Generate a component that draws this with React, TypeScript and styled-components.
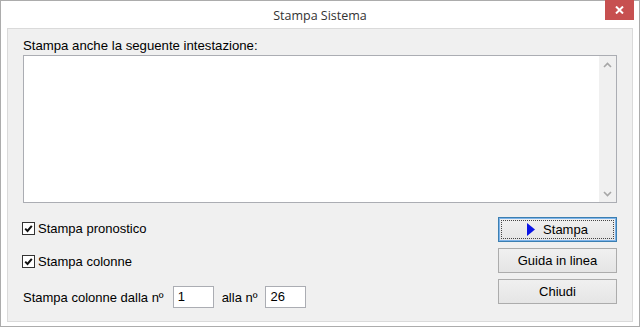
import * as React from 'react';
import styled, { createGlobalStyle } from 'styled-components';

const GlobalStyle = createGlobalStyle`
  html, body {
    margin: 0;
    padding: 0;
    background: #ffffff;
  }
  * {
    box-sizing: border-box;
  }
`;

function ChevronUp() {
  return (
    <svg width="9" height="6" viewBox="0 0 9 6">
      <path d="M1 5 L4.5 1.5 L8 5" fill="none" stroke="#a6a6a6" strokeWidth="1.6" />
    </svg>
  );
}

function ChevronDown() {
  return (
    <svg width="9" height="6" viewBox="0 0 9 6">
      <path d="M1 1 L4.5 4.5 L8 1" fill="none" stroke="#a6a6a6" strokeWidth="1.6" />
    </svg>
  );
}

function CheckMark() {
  return (
    <svg width="9" height="9" viewBox="0 0 9 9">
      <path d="M1.2 4.6 L3.5 6.9 L7.8 1.8" fill="none" stroke="#111" strokeWidth="2" />
    </svg>
  );
}

type CheckRowProps = {
  label: string;
};

function CheckRow({ label }: CheckRowProps) {
  return (
    <Row>
      <Box>
        <CheckMark />
      </Box>
      <Text>{label}</Text>
    </Row>
  );
}

export default function App() {
  return (
    <>
      <GlobalStyle />
      <Window>
        <TitleBar>
          <Title>Stampa Sistema</Title>
          <CloseButton>
            <svg width="9" height="8" viewBox="0 0 9 8">
              <path d="M1 0.5 L8 7.5 M8 0.5 L1 7.5" stroke="#fff" strokeWidth="2" />
            </svg>
          </CloseButton>
        </TitleBar>
        <Client>
          <Label>Stampa anche la seguente intestazione:</Label>
          <TextArea>
            <Editable />
            <ScrollBar>
              <ChevronUp />
              <ChevronDown />
            </ScrollBar>
          </TextArea>
          <Bottom>
            <Options>
              <CheckRow label="Stampa pronostico" />
              <CheckRow label="Stampa colonne" />
              <RangeRow>
                <Text>Stampa colonne dalla nº</Text>
                <NumberField $before={9}>1</NumberField>
                <Text>alla nº</Text>
                <NumberField $before={8}>26</NumberField>
              </RangeRow>
            </Options>
            <Buttons>
              <Button $primary>
                <FocusRing>
                  <svg width="8" height="13" viewBox="0 0 8 13">
                    <path d="M0 0 L8 6.5 L0 13 Z" fill="#0a14e6" />
                  </svg>
                  <span>Stampa</span>
                </FocusRing>
              </Button>
              <Button>Guida in linea</Button>
              <Button>Chiudi</Button>
            </Buttons>
          </Bottom>
        </Client>
      </Window>
    </>
  );
}

const Window = styled.div`
  width: 640px;
  height: 327px;
  border: 1px solid #acacac;
  background: #ffffff;
  display: flex;
  flex-direction: column;
  padding: 0 6px 4px 6px;
  font-family: 'Liberation Sans', Arial, sans-serif;
`;

const TitleBar = styled.div`
  height: 27px;
  margin: 0 -6px;
  position: relative;
  display: flex;
  align-items: center;
  justify-content: center;
`;

const Title = styled.div`
  font-family: 'Open Sans', 'Noto Sans', sans-serif;
  font-size: 12.5px;
  color: #333333;
  margin-top: 2px;
`;

const CloseButton = styled.div`
  position: absolute;
  top: -1px;
  right: 5px;
  width: 29px;
  height: 20px;
  background: #c75050;
  display: flex;
  align-items: center;
  justify-content: center;
`;

const Client = styled.div`
  flex: 1;
  border: 1px solid #dadada;
  background: #f0f0f0;
  padding: 8px 15px 0 15px;
  display: flex;
  flex-direction: column;
`;

const Label = styled.div`
  font-size: 13.2px;
  line-height: 18px;
  color: #000;
`;

const TextArea = styled.div`
  height: 148px;
  border: 1px solid #abadb3;
  background: #ffffff;
  display: flex;
`;

const Editable = styled.div`
  flex: 1;
`;

const ScrollBar = styled.div`
  width: 17px;
  background: #f0f0f0;
  display: flex;
  flex-direction: column;
  justify-content: space-between;
  align-items: center;
  padding: 6px 0 5px 0;
`;

const Bottom = styled.div`
  margin-top: 14px;
  display: flex;
  justify-content: space-between;
`;

const Options = styled.div`
  display: flex;
  flex-direction: column;
`;

const Row = styled.div`
  height: 22px;
  display: flex;
  align-items: center;
  gap: 3px;
  margin-bottom: 11px;
  margin-left: -1px;
`;

const RangeRow = styled.div`
  height: 22px;
  display: flex;
  align-items: center;
  margin-top: 3px;
`;

const Box = styled.div`
  width: 13px;
  height: 13px;
  border: 1px solid #333333;
  background: #ffffff;
  display: flex;
  align-items: center;
  justify-content: center;
`;

const Text = styled.span`
  font-size: 13px;
  color: #000;
`;

const NumberField = styled.div<{ $before: number }>`
  width: 41px;
  height: 22px;
  margin: 0 8px 0 ${(p) => p.$before}px;
  border: 1px solid #abadb3;
  background: #ffffff;
  font-size: 13px;
  line-height: 20px;
  padding-left: 4px;
`;

const Buttons = styled.div`
  display: flex;
  flex-direction: column;
  gap: 6px;
`;

const Button = styled.div<{ $primary?: boolean }>`
  width: 119px;
  height: 25px;
  border: 1px solid ${(p) => (p.$primary ? '#3c7fb1' : '#acacac')};
  background: linear-gradient(#f0f0f0, #e5e5e5);
  font-size: 13px;
  color: #000;
  display: flex;
  align-items: center;
  justify-content: center;
  padding: ${(p) => (p.$primary ? '2px' : '0')};
  box-shadow: ${(p) => (p.$primary ? 'inset 0 0 0 1px #7eb4ea' : 'none')};
`;

const FocusRing = styled.div`
  width: 100%;
  height: 100%;
  border: 1px dotted #444;
  display: flex;
  align-items: center;
  justify-content: center;
  gap: 8px;
`;
